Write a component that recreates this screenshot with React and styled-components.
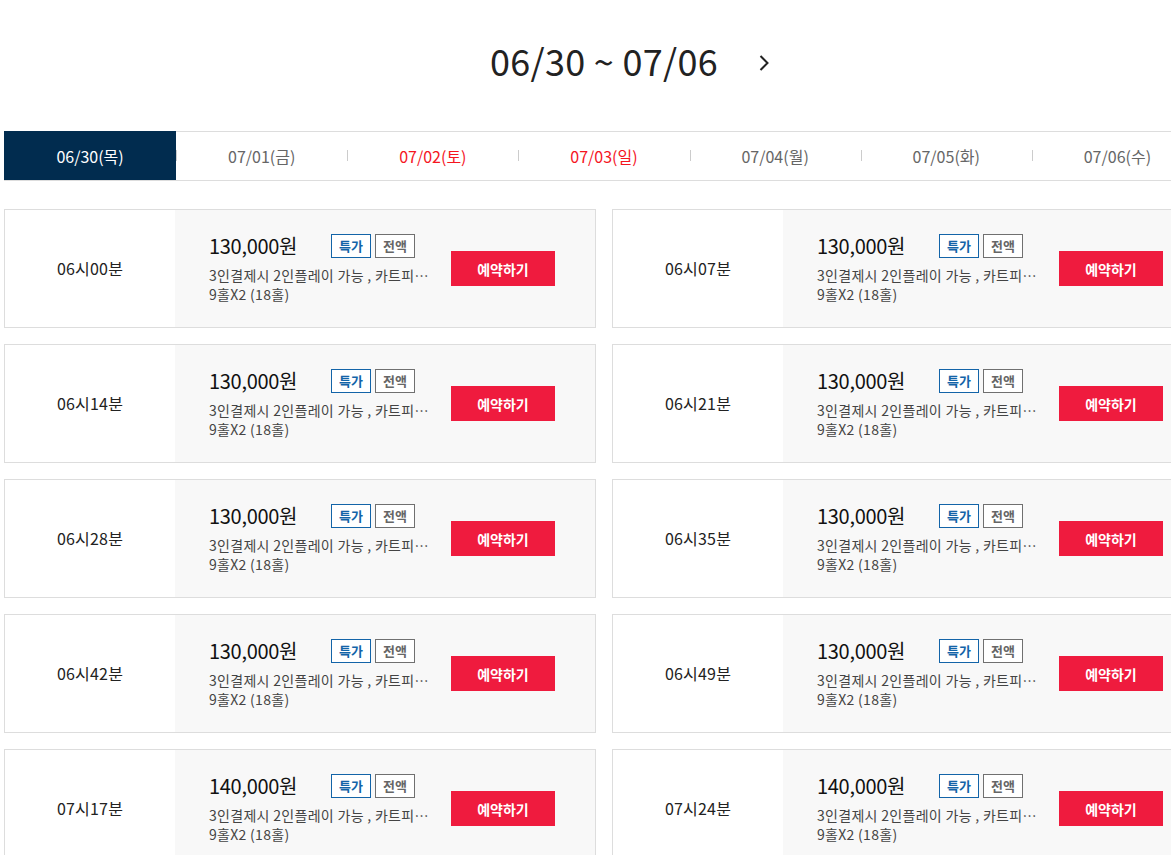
import React from 'react'
import styled, { createGlobalStyle } from 'styled-components'

const GlobalStyle = createGlobalStyle`
   html, body { margin: 0; padding: 0; overflow: hidden; background: #fff; }
   body {
      font-family: "Noto Sans CJK KR", "Noto Sans", sans-serif;
      color: #222;
   }
`

const days = [
   { date: '06/30', day: '목', active: true },
   { date: '07/01', day: '금' },
   { date: '07/02', day: '토', holiday: true },
   { date: '07/03', day: '일', holiday: true },
   { date: '07/04', day: '월' },
   { date: '07/05', day: '화' },
   { date: '07/06', day: '수' },
]

const slots = [
   ['06', '00', '130,000'], ['06', '07', '130,000'],
   ['06', '14', '130,000'], ['06', '21', '130,000'],
   ['06', '28', '130,000'], ['06', '35', '130,000'],
   ['06', '42', '130,000'], ['06', '49', '130,000'],
   ['07', '17', '140,000'], ['07', '24', '140,000'],
]

export default function App(){
   return (
      <Page>
         <GlobalStyle/>
         <Week>
            <Range>
               06/30 ~ 07/06
               <Next aria-label="next week">
                  <svg width="12" height="18" viewBox="0 0 12 18">
                     <path d="M2.5 2 L9.5 9 L2.5 16" fill="none" stroke="#222" strokeWidth="2"/>
                  </svg>
               </Next>
            </Range>
         </Week>
         <Tabs>{
            days.map((d, i) =>
               <Tab key={i} active={d.active} holiday={d.holiday} first={i === 0}>
                  {d.date}({d.day})
               </Tab>
            )
         }</Tabs>
         <Grid>{
            slots.map(([h, m, price], i) =>
               <Slot key={i}>
                  <Slot.Time>{h}시{m}분</Slot.Time>
                  <Slot.Body>
                     <Info>
                        <Info.Head>
                           <Price>{price}원</Price>
                           <Badge kind="sale">특가</Badge>
                           <Badge>전액</Badge>
                        </Info.Head>
                        <Info.Desc>3인결제시 2인플레이 가능 , 카트피…</Info.Desc>
                        <Info.Desc>9홀X2 (18홀)</Info.Desc>
                     </Info>
                     <Book>예약하기</Book>
                  </Slot.Body>
               </Slot>
            )
         }</Grid>
      </Page>
   )
}

const Page = styled.div`
   width: 1200px;
   margin-left: 4px;
`

const Week = styled.div`
   display: flex;
   justify-content: center;
   padding-top: 35px;
   height: 131px;
   box-sizing: border-box;
`

const Range = styled.h2`
   position: relative;
   margin: 0;
   font-size: 36px;
   font-weight: 400;
   line-height: 50px;
   letter-spacing: 0.3px;
   color: #222;
   align-self: flex-start;
`

const Next = styled.span`
   position: absolute;
   right: -52px;
   top: 19px;
   display: flex;
`

const Tabs = styled.nav`
   display: grid;
   grid-template-columns: repeat(7, 1fr);
   border: 1px solid #ddd;
   height: 50px;
   box-sizing: border-box;
`

const Tab = styled.div`
   position: relative;
   display: flex;
   align-items: center;
   justify-content: center;
   font-size: 16px;
   color: ${p => p.active ? '#fff' : p.holiday ? '#f5161f' : '#666'};
   background: ${p => p.active ? '#012c4f' : 'transparent'};
   margin-top: -1px;
   margin-left: ${p => p.first ? '-1px' : '0'};
   &::before {
      content: '';
      display: ${p => p.first ? 'none' : 'block'};
      position: absolute;
      left: 0;
      top: 19px;
      width: 1px;
      height: 11px;
      background: #ccc;
   }
`

const Grid = styled.section`
   display: grid;
   grid-template-columns: repeat(2, 592px);
   column-gap: 16px;
   row-gap: 16px;
   margin-top: 28px;
`

const Slot = styled.article`
   display: flex;
   height: 119px;
   box-sizing: border-box;
   border: 1px solid #ddd;
   background: #fff;
`
Slot.Time = styled.div`
   flex: 0 0 170px;
   display: flex;
   align-items: center;
   justify-content: center;
   font-size: 16px;
   color: #222;
   letter-spacing: 0.2px;
   padding-bottom: 1px;
`
Slot.Body = styled.div`
   flex: 1;
   display: flex;
   align-items: center;
   background: #f8f8f8;
   padding-left: 34px;
`

const Info = styled.div`
   width: 222px;
`
Info.Head = styled.div`
   display: flex;
   align-items: center;
   margin-bottom: 8px;
`
Info.Desc = styled.p`
   margin: 0;
   font-size: 14px;
   line-height: 19px;
   color: #444;
   letter-spacing: 0.3px;
   white-space: nowrap;
`

const Price = styled.strong`
   width: 122px;
   font-size: 20px;
   font-weight: 400;
   color: #111;
   letter-spacing: -0.3px;
   line-height: 24px;
`

const Badge = styled.span`
   width: 40px;
   height: 24px;
   box-sizing: border-box;
   display: flex;
   align-items: center;
   justify-content: center;
   margin-right: 4px;
   font-size: 13px;
   font-weight: 700;
   border: 1px solid ${p => p.kind === 'sale' ? '#1364a8' : '#707070'};
   color: ${p => p.kind === 'sale' ? '#1364a8' : '#666'};
   background: #fff;
`

const Book = styled.button`
   width: 104px;
   height: 35px;
   margin-left: 20px;
   border: 0;
   background: #ef1b3e;
   color: #fff;
   font-family: inherit;
   font-size: 14px;
   font-weight: 700;
   cursor: pointer;
`
